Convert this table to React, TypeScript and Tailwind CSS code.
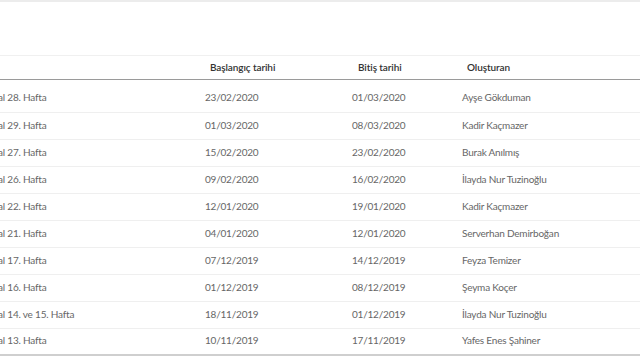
import React from "react";

const rows = [
  ["al 28. Hafta", "23/02/2020", "01/03/2020", "Ayşe Gökduman"],
  ["al 29. Hafta", "01/03/2020", "08/03/2020", "Kadir Kaçmazer"],
  ["al 27. Hafta", "15/02/2020", "23/02/2020", "Burak Anılmış"],
  ["al 26. Hafta", "09/02/2020", "16/02/2020", "İlayda Nur Tuzinoğlu"],
  ["al 22. Hafta", "12/01/2020", "19/01/2020", "Kadir Kaçmazer"],
  ["al 21. Hafta", "04/01/2020", "12/01/2020", "Serverhan Demirboğan"],
  ["al 17. Hafta", "07/12/2019", "14/12/2019", "Feyza Temizer"],
  ["al 16. Hafta", "01/12/2019", "08/12/2019", "Şeyma Koçer"],
  ["al 14. ve 15. Hafta", "18/11/2019", "01/12/2019", "İlayda Nur Tuzinoğlu"],
  ["al 13. Hafta", "10/11/2019", "17/11/2019", "Yafes Enes Şahiner"],
];

const cols = "grid grid-cols-[205px_147px_110px_1fr]";

export default function App() {
  return (
    <div className="w-[640px] h-[360px] overflow-hidden bg-white font-['Lato',sans-serif]">
      <div className="h-[2px] bg-[#ececec]" />
      <div className="h-[53px]" />
      <div className={`${cols} h-[25px] items-center border-t border-b border-t-[#f0f0f0] border-b-[#9a9a9a] text-[10px] tracking-[-0.1px] font-semibold text-[#333]`}>
        <div />
        <div className="pl-[5px]">Başlangıç tarihi</div>
        <div className="pl-[6px]">Bitiş tarihi</div>
        <div className="pl-[5px]">Oluşturan</div>
      </div>
      {rows.map((r, i) => (
        <div
          key={i}
          className={`${cols} items-center text-[10px] tracking-[-0.2px] text-[#666] ${
            i === 0 ? "h-[33px] pt-[3px]" : "h-[27px] pb-[2px]"
          } ${i === rows.length - 1 ? "border-b-2 border-[#cfcfcf]" : "border-b border-[#efefef]"}`}
        >
          <div className="-ml-[2px] whitespace-nowrap">{r[0]}</div>
          <div>{r[1]}</div>
          <div>{r[2]}</div>
          <div>{r[3]}</div>
        </div>
      ))}
    </div>
  );
}
